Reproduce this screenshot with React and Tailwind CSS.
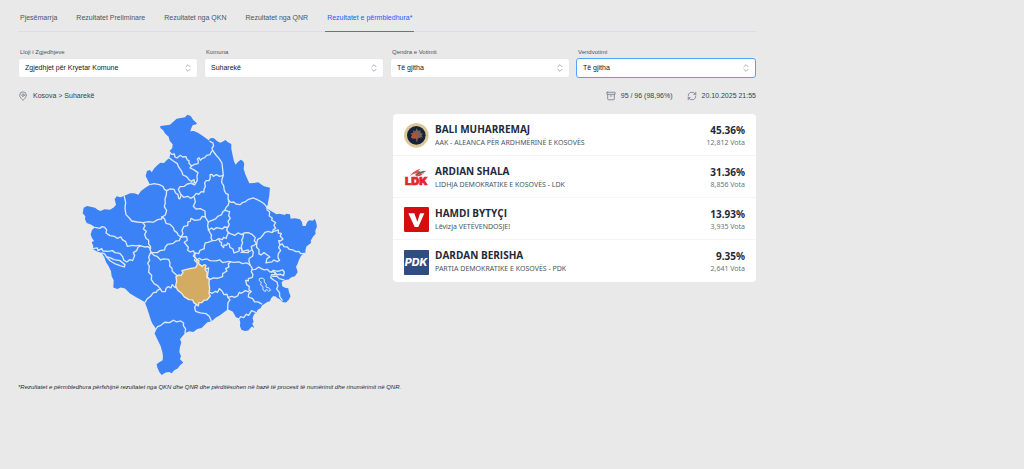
import React from "react";
import { Archive, ChevronsUpDown, MapPin, RefreshCw } from "lucide-react";

const tabs = [
  "Pjesëmarrja",
  "Rezultatet Preliminare",
  "Rezultatet nga QKN",
  "Rezultatet nga QNR",
  "Rezultatet e përmbledhura*",
];

const filters = [
  { id: "lloji", label: "Lloji i Zgjedhjeve", value: "Zgjedhjet për Kryetar Komune" },
  { id: "komuna", label: "Komuna", value: "Suharekë" },
  { id: "qendra", label: "Qendra e Votimit", value: "Të gjitha" },
  { id: "vendvotimi", label: "Vendvotimi", value: "Të gjitha", active: true },
];

const OUTLINE =
  "M271 62 300 58 320 40 345 36 352 28 362 32 370 44 379 52 381 56 368 60 364 68 361 78 372 77 385 83 402 94 418 106 418 101 424 98 432 99 441 107 450 112 458 109 466 104 474 111 484 116 484 130 488 150 492 168 497 178 503 171 512 163 519 167 523 175 521 190 526 207 538 234 552 233 565 231 573 237 582 243 600 247 598 270 593 299 587 309 597 313 608 320 620 327 628 325 645 329 648 325 660 327 662 340 675 339 690 342 696 350 698 362 707 362 712 350 718 345 728 346 735 341 739 352 741 364 736 376 737 385 728 396 722 407 724 412 710 423 707 432 706 444 699 446 693 452 686 466 683 475 678 485 681 492 683 501 675 513 664 516 656 523 645 524 635 530 637 543 647 548 655 549 657 560 662 573 656 584 648 592 640 591 635 588 630 582 622 578 617 574 610 572 603 580 600 588 592 590 585 595 576 601 572 609 564 613 560 620 552 628 548 638 551 650 547 655 553 668 546 664 540 670 535 676 525 677 515 674 510 663 511 652 508 640 498 636 493 627 488 619 480 615 473 613 463 620 450 630 438 637 425 648 412 651 395 668 382 671 370 680 358 678 345 683 338 692 330 702 334 712 330 725 328 740 333 752 330 762 340 772 331 779 323 790 313 795 305 804 298 800 287 802 275 809 268 800 262 787 260 777 269 770 278 765 279 752 277 740 272 722 262 702 254 685 258 674 255 666 247 655 242 643 236 623 230 605 224 590 214 584 200 577 180 565 165 550 152 547 142 551 130 547 131 525 125 513 123 498 116 483 108 470 103 456 95 443 80 438 68 431 70 422 65 411 72 407 66 398 62 388 66 374 75 366 64 358 50 353 45 342 46 333 38 324 41 307 51 302 62 304 75 307 84 314 92 317 103 312 120 313 132 306 138 298 134 282 140 273 151 276 162 272 180 264 193 264 205 268 213 257 226 247 240 238 233 224 227 212 231 197 240 194 245 201 253 189 262 180 271 172 282 173 290 165 298 158 301 146 299 137 307 128 308 117 299 106 296 94 286 85 279 74 271 68Z";

const BORDERS = [
  "M299 140 305 147 313 146 315 155 321 158 331 150 338 155 348 154 352 164 357 166 357 174 365 182 373 177 384 175 385 168 382 161 387 157 391 165 396 160 404 157 410 150 420 148 424 140 428 135 426 128 431 122 429 113 420 108",
  "M298 158 310 167 322 175 326 185 335 198 339 209 350 214 358 224 365 228 372 223 374 231 366 236 374 239 382 225 381 212 384 202 371 193 360 188 365 182",
  "M428 135 438 149 447 159 456 173 458 191 460 210 456 222 455 231 461 241 463 255 468 264 475 268 474 281 478 287 475 299 468 307 465 315",
  "M460 210 449 213 439 208 430 213 426 207 420 208 421 218 417 226 409 226 404 232 406 244 402 252 402 260 394 259 386 267 379 264 371 274 362 279 353 273 341 276 332 267 325 252 330 244 343 243 352 236 366 233",
  "M240 238 252 235 268 238 279 243 283 252 290 256 301 251 312 252 317 263 324 268 326 279 329 281 334 269",
  "M290 256 289 269 285 281 286 293 283 304 290 316 286 329 275 336",
  "M163 274 167 291 165 309 168 328 178 338 185 347 202 350 219 352 237 349 250 351 263 343 275 341 276 334 284 341 288 354 300 357 310 367 313 376 321 382 325 390 333 395",
  "M219 352 225 361 220 371 229 378 224 388 228 399 236 405 236 416 242 425 240 433 244 441",
  "M333 393 328 406 318 407 310 414 293 417 286 425 284 434 270 436 262 442 244 442",
  "M333 395 339 386 336 375 342 363 353 361 354 350 361 348 363 339 375 345 390 343 397 333 405 335",
  "M373 276 376 290 370 303 378 311 391 310 405 317 406 335 411 344 415 350 413 362 416 374 421 384 425 390 423 397 427 406 414 411 406 413 403 422 403 430 390 435 386 445 376 443 374 453 380 462",
  "M475 287 484 291 491 290 498 296 510 298 517 292 525 290 536 282 550 278 562 283 575 290 584 297 590 305",
  "M75 366 90 369 96 364 104 366 110 374 108 383 120 391 133 393 141 399 153 395 157 403 167 409 172 423 187 420 198 422 208 420 223 425 234 424 242 430",
  "M333 395 350 394 352 405 343 411 350 420 355 426 353 435 361 440 371 437 374 446 370 452 377 458 373 465 380 471",
  "M244 442 252 450 261 453 272 464 280 461 296 462 300 473 299 482 306 489 307 498 316 506 320 510",
  "M242 442 236 455 239 465 233 474 238 483 236 501 245 510 244 523 253 536 263 541 271 551 262 555 259 561 250 562 242 573 232 580 225 591",
  "M271 551 276 559 286 559 288 550 295 544 303 548 307 538 315 547 326 544",
  "M68 430 82 428 84 436 95 430 99 437 115 438 127 436 135 442 149 444 158 454 161 464 170 470 180 463 188 466 194 451 190 442 200 436 204 426 211 422",
  "M95 443 104 446 109 454 120 457 132 463 150 466 165 478 163 485 150 481 136 476 121 467 110 455",
  "M465 315 459 319 454 329 443 333 437 341 426 345 415 350",
  "M465 315 479 319 476 331 481 339 474 348 478 358 473 366 463 365 457 371 440 367 431 373 425 368 415 375",
  "M473 366 470 375 476 382 471 391 469 399 461 396 457 403 446 400 438 405 427 406",
  "M446 400 450 409 455 412 454 420 461 427 462 419 470 420 473 413 478 416 480 426 489 431 492 443 502 440 508 436 507 427 513 429 517 438 535 434 535 442 513 441",
  "M474 381 483 386 495 390 504 383 516 388 522 383 535 382 546 387 556 397 553 406 560 415 552 420 544 423 546 434 539 438",
  "M521 385 519 397 515 405 518 412 514 423 516 435",
  "M560 415 563 402 572 398 579 389 585 381 595 378 607 382 610 373 617 369 612 360 617 352 605 344 607 338 598 332 599 320 591 313",
  "M608 380 616 377 625 374 625 383 634 384 631 393 639 401 632 407 626 406 630 419 626 427 632 435 625 446 624 457 629 465 621 469 612 464 605 470 588 473 591 460 600 455 589 447 582 442 573 449 567 446 567 433 560 426 560 415",
  "M630 419 637 416 642 424 652 425 658 432 669 434 678 439 687 438 692 445 705 444",
  "M380 464 388 459 396 464 411 461 420 466 438 467 450 464 458 472 477 468 491 471 508 470 517 475 531 473 540 479 537 468 538 459 548 453 550 440 546 434",
  "M405 492 416 488 414 502 412 516 421 522 430 518 442 519 458 514 458 505 471 497 467 490 477 485 475 476 481 470",
  "M540 479 547 489 544 500 549 507 547 516 535 520 535 527 527 525 530 538 538 544 537 554 544 559 536 566 535 575 548 580 554 590 564 590 575 596",
  "M547 493 557 492 566 485 574 490 583 494 592 492 600 500 612 499 616 507 605 508 602 517 611 524 621 530 624 542 620 551 629 563 629 573 637 585",
  "M604 500 610 495 624 498 638 494 643 500 641 511 632 507 620 508 616 502M608 513 621 513 628 520 642 524",
  "M417 560 427 564 437 558 443 561 448 550 456 557 462 568 471 567 474 576 486 573 494 576 503 572 508 561 514 564 526 556 537 560",
  "M474 576 480 584 474 592 473 613M378 598 374 607 377 618 391 623 408 625 418 633 424 647",
  "M508 640 512 634 521 637 529 627 536 630 545 616 557 621",
  "M255 675 263 664 273 660 284 651 299 652 310 645 320 650 332 647 341 653 340 661 347 671 345 683",
];

const SUHAREKA =
  "M380 462 387 466 386 475 397 484 402 478 408 480 405 492 412 503 410 516 418 523 417 535 419 550 417 565 421 572 411 584 402 585 396 592 387 592 385 602 379 597 372 593 368 584 357 583 343 575 335 564 323 555 317 542 320 528 318 514 327 509 333 511 339 502 336 496 350 492 363 489 377 487 382 478Z";

const LAKE = "M569 520 576 518 583 522 583 530 589 537 588 545 597 548 602 555 596 558 589 552 586 559 579 554 579 544 572 539 574 531 569 527Z";

function KosovoMap() {
  return (
    <svg
      viewBox="36 26 708 788"
      className="w-[65%]"
      role="img"
      aria-label="Harta e komunave të Kosovës"
      strokeLinejoin="round"
      strokeLinecap="round"
    >
      <path d={OUTLINE} fill="#3b82f6" />
      <g fill="none" stroke="#dce8fa" strokeWidth="4">
        {BORDERS.map((d) => (
          <path key={d} d={d} />
        ))}
        <path d={LAKE} strokeWidth="3" />
      </g>
      <path d={SUHAREKA} fill="#d4ab62" stroke="#f1ead9" strokeWidth="4" />
    </svg>
  );
}

function AakLogo() {
  return (
    <svg viewBox="0 0 75 75" className="size-[25px]" aria-hidden="true">
      <circle cx="37" cy="37" r="37" fill="#e5cf9f" />
      <circle cx="37" cy="37" r="32" fill="none" stroke="#cdb98c" strokeWidth="4" strokeDasharray="3 3" />
      <circle cx="37" cy="37" r="28" fill="#15233d" />
      <path
        d="M38 16 43 24 50 21 49 29 57 32 53 37 56 43 47 44 41 47 40 56H37L36 47 27 47 21 44 24 37 20 31 28 29 27 22 34 25Z"
        fill="#7d6253"
      />
      <path d="M21 43 25 36 23 32 32 37 35 31 38 38 41 43 32 46Z" fill="#c94b32" />
    </svg>
  );
}

function LdkLogo() {
  return (
    <svg viewBox="0 0 75 75" className="size-[25px]" aria-hidden="true">
      <path d="M17 34C24 22 34 16 49 11L43 18 50 17 42 24C32 25 24 28 17 34Z" fill="#e8504a" />
      <path d="M33 30C41 20 52 18 68 17L57 24 63 25C52 26 43 27 37 33Z" fill="#6b6660" />
      <path d="M36 35C40 28 47 26 56 28L49 32Z" fill="#e33a35" />
      <text
        x="37"
        y="60"
        textAnchor="middle"
        fontFamily="Inter, sans-serif"
        fontWeight="900"
        fontSize="33"
        fill="#e3262b"
        stroke="#e3262b"
        strokeWidth="2"
      >
        LDK
      </text>
    </svg>
  );
}

function VvLogo() {
  return (
    <svg viewBox="0 0 75 75" className="size-[25px]" aria-hidden="true">
      <rect width="75" height="75" rx="4" fill="#d40d10" />
      <path d="M13 19H31L40 44 48 19H61L43 60H32Z" fill="#fff" />
    </svg>
  );
}

function PdkLogo() {
  return (
    <svg viewBox="0 0 75 75" className="size-[25px]" aria-hidden="true">
      <rect width="75" height="75" rx="2" fill="#304d82" />
      <text
        x="36"
        y="48"
        textAnchor="middle"
        fontFamily="Inter, sans-serif"
        fontWeight="800"
        fontStyle="italic"
        fontSize="32"
        fill="#fff"
      >
        PDK
      </text>
    </svg>
  );
}

const results = [
  { name: "BALI MUHARREMAJ", party: "AAK - ALEANCA PËR ARDHMËRINË E KOSOVËS", pct: "45.36%", votes: "12,812 Vota", Logo: AakLogo },
  { name: "ARDIAN SHALA", party: "LIDHJA DEMOKRATIKE E KOSOVËS - LDK", pct: "31.36%", votes: "8,856 Vota", Logo: LdkLogo },
  { name: "HAMDI BYTYÇI", party: "Lëvizja VETËVENDOSJE!", pct: "13.93%", votes: "3,935 Vota", Logo: VvLogo },
  { name: "DARDAN BERISHA", party: "PARTIA DEMOKRATIKE E KOSOVËS - PDK", pct: "9.35%", votes: "2,641 Vota", Logo: PdkLogo },
];

function Filter({ id, label, value, active }) {
  return (
    <div className="flex flex-col">
      <label htmlFor={id} className="px-0.5 text-[6px] leading-3 text-gray-600">
        {label}
      </label>
      <div className="grid items-center">
        <select
          id={id}
          defaultValue={value}
          className={
            "col-start-1 row-start-1 h-5 w-full appearance-none rounded-[3px] border bg-white px-1.5 text-[7px] text-gray-900 outline-none " +
            (active ? "border-blue-400" : "border-gray-200")
          }
        >
          <option>{value}</option>
        </select>
        <ChevronsUpDown
          className="pointer-events-none col-start-1 row-start-1 mr-[5px] size-2.5 justify-self-end text-gray-400"
          strokeWidth={2}
          aria-hidden="true"
        />
      </div>
    </div>
  );
}

export default function App() {
  return (
    <div className="min-h-screen bg-[#e9e9e9] pl-[18px] font-['Liberation_Sans',Arial,sans-serif] text-gray-700">
      <main className="max-w-[738px]">
        <nav className="flex gap-[15px] border-b border-gray-300/60 pt-1">
          {tabs.map((tab, i) => (
            <a
              key={tab}
              href="#"
              aria-current={i === 4 ? "page" : undefined}
              className={
                "-mb-px flex h-7 items-center border-b px-0.5 pt-0.5 text-[7px] whitespace-nowrap " +
                (i === 4 ? "border-blue-500 text-blue-600" : "border-transparent text-gray-600")
              }
            >
              {tab}
            </a>
          ))}
        </nav>

        <div className="mt-3.5 grid grid-cols-4 gap-1.5">
          {filters.map((f) => (
            <Filter key={f.id} {...f} />
          ))}
        </div>

        <div className="mt-3 flex items-center justify-between text-[7px] leading-3">
          <div className="flex items-center gap-[5px]">
            <MapPin className="size-2.5 text-gray-500" strokeWidth={1.8} aria-hidden="true" />
            <span>Kosova &gt; Suharekë</span>
          </div>
          <div className="flex items-center gap-3.5">
            <span className="flex items-center gap-[5px]">
              <Archive className="size-2.5 text-gray-500" strokeWidth={1.8} aria-hidden="true" />
              95 / 96 (98,96%)
            </span>
            <span className="flex items-center gap-[5px]">
              <RefreshCw className="size-2.5 text-gray-500" strokeWidth={1.8} aria-hidden="true" />
              20.10.2025 21:55
            </span>
          </div>
        </div>

        <div className="mt-3 grid grid-cols-2 items-start gap-3">
          <div className="flex justify-center">
            <KosovoMap />
          </div>
          <ul className="divide-y divide-gray-100 rounded bg-white font-['Noto_Sans',sans-serif]">
            {results.map(({ name, party, pct, votes, Logo }) => (
              <li key={name} className="flex h-[42px] items-center gap-1.5 px-[11px] pt-0.5">
                <Logo />
                <div className="flex-1">
                  <h2 className="font-['Open_Sans',sans-serif] text-[10px] leading-[14px] font-bold text-gray-800">
                    {name}
                  </h2>
                  <p className="text-[7px] leading-[14px] text-gray-600">{party}</p>
                </div>
                <div className="text-right">
                  <p className="text-[10px] leading-[14px] font-bold text-gray-800">{pct}</p>
                  <p className="text-[7px] leading-3 text-gray-500">{votes}</p>
                </div>
              </li>
            ))}
          </ul>
        </div>

        <p className="mt-1 text-[6px] leading-3 text-gray-800 italic">
          *Rezultatet e përmbledhura përfshijnë rezultatet nga QKN dhe QNR dhe përditësohen në bazë të procesit të
          numërimit dhe rinumërimit në QNR.
        </p>
      </main>
    </div>
  );
}
